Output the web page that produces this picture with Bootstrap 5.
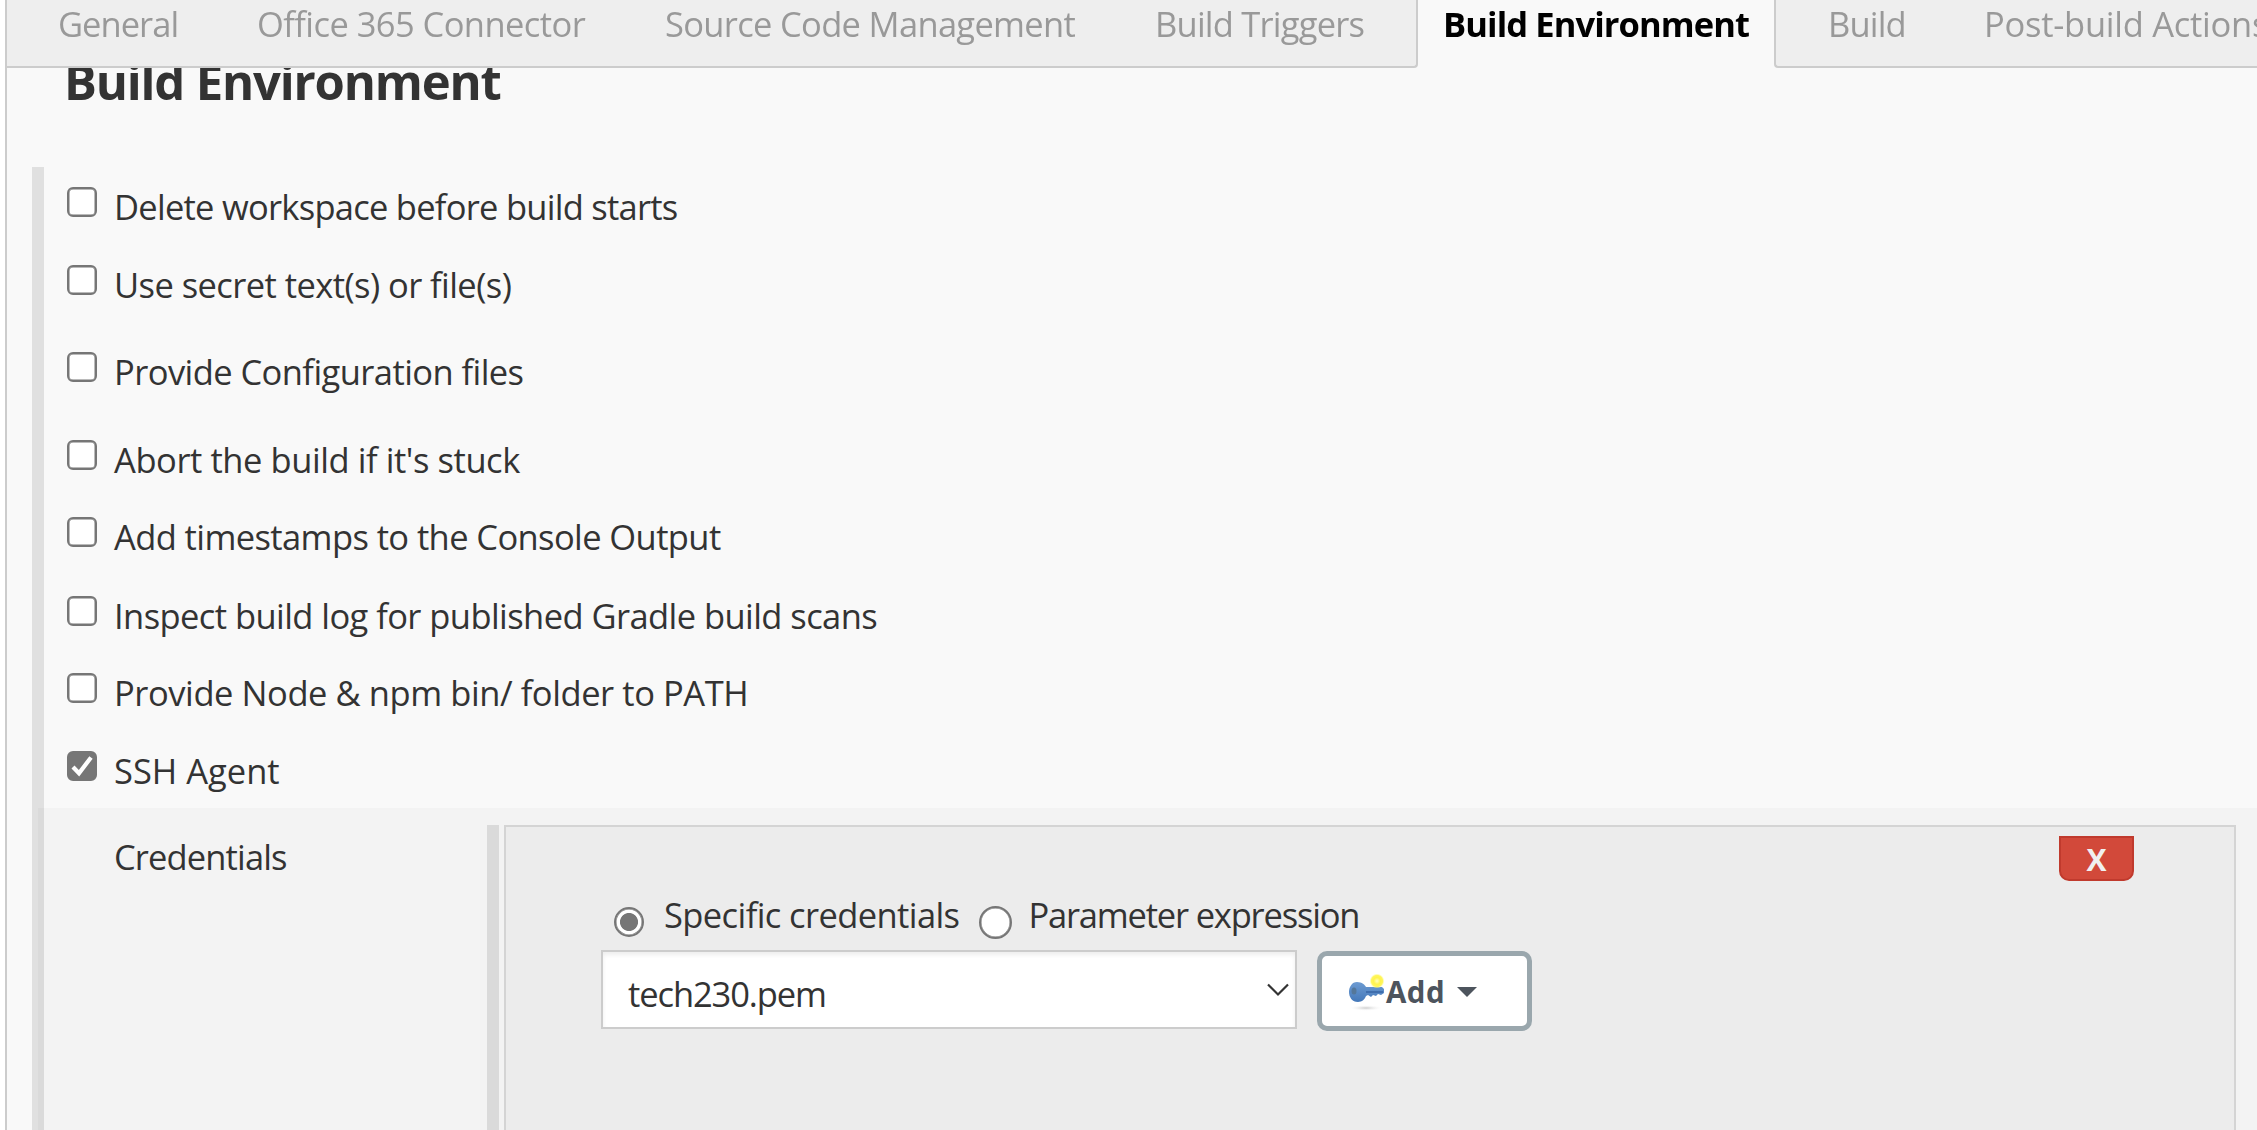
<!DOCTYPE html>
<html lang="en">
<head>
<meta charset="utf-8">
<title>Build Environment</title>
<link rel="stylesheet" href="https://cdn.jsdelivr.net/npm/bootstrap@5.3.0/dist/css/bootstrap.min.css">
<style>
body{font-family:"Open Sans","Noto Sans",sans-serif;font-size:34.5px;line-height:38px;letter-spacing:-.57px;color:#333;background:#fff;height:1130px;overflow:hidden}
.config-page{height:1130px;margin-left:5px;border-left:2px solid #ccc;background:#f9f9f9}
/* tab strip */
.config-tabs{left:7px;height:68px;line-height:47px;overflow:hidden;color:#999}
.config-tab{flex:none;padding-left:26px;background:#eee;border-bottom:2px solid #ccc;white-space:nowrap}
.tab-general{width:224px;padding-left:51px;letter-spacing:-.98px}
.tab-office{width:408px}
.tab-scm{width:490px;letter-spacing:-.68px}
.tab-triggers{width:289px;letter-spacing:-.78px;border-right:2px solid #ccc;border-bottom-right-radius:4px}
.tab-active{width:356px;padding-left:25px;background:#f9f9f9;color:#000;font-weight:700;letter-spacing:-.91px;border-bottom:0}
.tab-build{width:184px;padding-left:52px;letter-spacing:-.82px;border-left:2px solid #ccc;border-bottom-left-radius:4px}
.tab-post{width:340px;letter-spacing:-.26px}
.section-title{font-size:49px;font-weight:700;line-height:66px;letter-spacing:-1.18px;padding:48px 0 0 57px;height:167px}
/* option rows */
.section-body{margin-left:25px;border-left:12px solid #e0e0e0;padding-top:20px;height:963px}
.opt-row{padding-left:23px;height:78px}
.opt-row span{margin:.5px 0 0 17px}
.h-87{height:87px}.h-88{height:88px}.h-77{height:77px}.h-79{height:79px}.h-57{height:57px}
.form-check-input.cfg-box,.form-check-input.cfg-radio{flex:none;float:none;width:30px;height:30px;margin:0;border:2px solid #767676;background-color:#fff;box-shadow:inset 0 0 0 .5px #767676}
.form-check-input.cfg-box{border-radius:6px}
.form-check-input.cfg-box:checked{background:#767676 url("data:image/svg+xml,%3Csvg xmlns='http://www.w3.org/2000/svg' viewBox='0 0 30 30'%3E%3Cpath d='M6 16l6 6.2L24 6.5' fill='none' stroke='%23fff' stroke-width='4.2'/%3E%3C/svg%3E") center/30px 30px no-repeat}
.form-check-input.cfg-radio{margin-top:4px}
.form-check-input.cfg-radio:checked{background-image:radial-gradient(circle,#767676 8.6px,#fff 9.4px)}
.form-check-input.cfg-radio.r-large{width:33px;height:33px;margin-top:3px}
.ls-a{letter-spacing:-.74px}.ls-b{letter-spacing:-.43px}.ls-c{letter-spacing:-.6px}.ls-d{letter-spacing:-.43px}.ls-e{letter-spacing:0}.ls-f{letter-spacing:-.87px}.ls-g{letter-spacing:-1.2px}
/* credentials block */
.nested{margin-left:-6px;padding:17px 21px 0 0;height:322px;background:rgba(0,0,0,.024)}
.nested-label{width:449px;padding:13px 0 0 76px}
.drag-bar{width:12px;margin-right:5px;background:#dadada}
.cred-box{height:330px;padding:0 100px 0 95px;border:2px solid #d4d4d4;background:#ececec}
.btn.btn-x{width:75px;height:45px;margin-top:9px;padding:0;border:2px solid #c03a2d;border-radius:0 0 10px 10px;background:#d2493a;color:#f0f0f0;font-size:30px;font-weight:700;line-height:43px;letter-spacing:0}
.radio-line{padding:15px 0 0 13px;height:69px}
.radio-line label{height:38px}
.radio-line .form-check-input{transform:translateY(7px)}
.form-select.cred-select{width:696px;height:79px;padding:9px 40px 0 25px;border:2px solid #ccc;border-radius:0;box-shadow:inset 0 3px 4px rgba(0,0,0,.07);color:#333;font-size:34.5px;line-height:46px;letter-spacing:-1.1px;background:#fff url("data:image/svg+xml,%3Csvg xmlns='http://www.w3.org/2000/svg' viewBox='0 0 22 14'%3E%3Cpath d='M1 1.5l10 10 10-10' fill='none' stroke='%23333' stroke-width='2.2'/%3E%3C/svg%3E") right 6px top 31px/22px 14px no-repeat}
.btn.btn-add{width:215px;height:80px;margin:1px 0 0 20px;padding:1px 0 0 25px;border:5px solid #9aa7ad;border-radius:10px;background:#fff;color:#4d545d;font-size:29.5px;font-weight:700;letter-spacing:.5px;line-height:70px}
.key-icon{width:38px;height:38px;flex:none;margin-right:1px}
.caret{width:20px;height:10px;margin:0 0 0 12px}
</style>
</head>
<body>
<nav class="config-tabs d-flex fixed-top">
  <div class="config-tab tab-general">General</div>
  <div class="config-tab tab-office">Office 365 Connector</div>
  <div class="config-tab tab-scm">Source Code Management</div>
  <div class="config-tab tab-triggers">Build Triggers</div>
  <div class="config-tab tab-active">Build Environment</div>
  <div class="config-tab tab-build">Build</div>
  <div class="config-tab tab-post">Post-build Actions</div>
</nav>
<main class="config-page">
  <h1 class="section-title m-0">Build Environment</h1>
  <div class="section-body">
    <label class="opt-row d-flex"><input class="form-check-input cfg-box" type="checkbox"><span class="ls-a">Delete workspace before build starts</span></label>
    <label class="opt-row h-87 d-flex"><input class="form-check-input cfg-box" type="checkbox"><span>Use secret text(s) or file(s)</span></label>
    <label class="opt-row h-88 d-flex"><input class="form-check-input cfg-box" type="checkbox"><span>Provide Configuration files</span></label>
    <label class="opt-row h-77 d-flex"><input class="form-check-input cfg-box" type="checkbox"><span class="ls-b">Abort the build if it's stuck</span></label>
    <label class="opt-row h-79 d-flex"><input class="form-check-input cfg-box" type="checkbox"><span class="ls-c">Add timestamps to the Console Output</span></label>
    <label class="opt-row h-77 d-flex"><input class="form-check-input cfg-box" type="checkbox"><span>Inspect build log for published Gradle build scans</span></label>
    <label class="opt-row d-flex"><input class="form-check-input cfg-box" type="checkbox"><span class="ls-d">Provide Node &amp; npm bin/ folder to PATH</span></label>
    <label class="opt-row h-57 d-flex"><input class="form-check-input cfg-box" type="checkbox" checked><span class="ls-e">SSH Agent</span></label>
    <div class="nested d-flex">
      <div class="nested-label flex-shrink-0 ls-f">Credentials</div>
      <div class="drag-bar flex-shrink-0"></div>
      <div class="cred-box flex-grow-1">
        <div class="d-flex justify-content-end"><button type="button" class="btn btn-x">X</button></div>
        <div class="radio-line d-flex">
          <label class="d-flex"><input class="form-check-input cfg-radio" type="radio" name="mode" checked><span class="ls-c ms-3 ps-1">Specific credentials</span></label>
          <label class="d-flex ms-3 ps-1"><input class="form-check-input cfg-radio r-large" type="radio" name="mode"><span class="ls-g ms-3">Parameter expression</span></label>
        </div>
        <div class="d-flex">
          <select class="form-select cred-select"><option>tech230.pem</option></select>
          <button type="button" class="btn btn-add d-flex align-items-center">
            <svg class="key-icon" viewBox="0 0 38 38">
              <defs>
                <radialGradient id="glow"><stop offset="0" stop-color="#ffffc0"/><stop offset=".45" stop-color="#fff34d"/><stop offset=".75" stop-color="#fff65c"/><stop offset="1" stop-color="#fffb9a" stop-opacity="0"/></radialGradient>
                <radialGradient id="shade"><stop offset="0" stop-color="#ccc"/><stop offset="1" stop-color="#fff" stop-opacity="0"/></radialGradient>
                <linearGradient id="steel" x2="0" y2="1"><stop offset="0" stop-color="#6d9bd2"/><stop offset="1" stop-color="#4478b9"/></linearGradient>
              </defs>
              <ellipse cx="19" cy="35" rx="17" ry="3" fill="url(#shade)"/>
              <path d="M10 9c5 0 8 3 9 5h16l2 2v4l-3 2-3-1-2 2-3-1-2 2-3-2-2 1c-1 3-4 6-8 6-6 0-9-5-9-10s3-10 8-10z" fill="url(#steel)"/>
              <path d="M19 19h17" stroke="#3765a5" stroke-width="1.5"/>
              <ellipse cx="7" cy="18" rx="2.5" ry="3.5" fill="#54779a"/>
              <circle cx="30" cy="8" r="7.5" fill="url(#glow)"/>
            </svg>Add<svg class="caret" viewBox="0 0 20 10"><path d="M0 0h20L10 10z" fill="#4d545d"/></svg>
          </button>
        </div>
      </div>
    </div>
  </div>
</main>
<script src="https://cdn.jsdelivr.net/npm/bootstrap@5.3.0/dist/js/bootstrap.bundle.min.js"></script>
</body>
</html>
